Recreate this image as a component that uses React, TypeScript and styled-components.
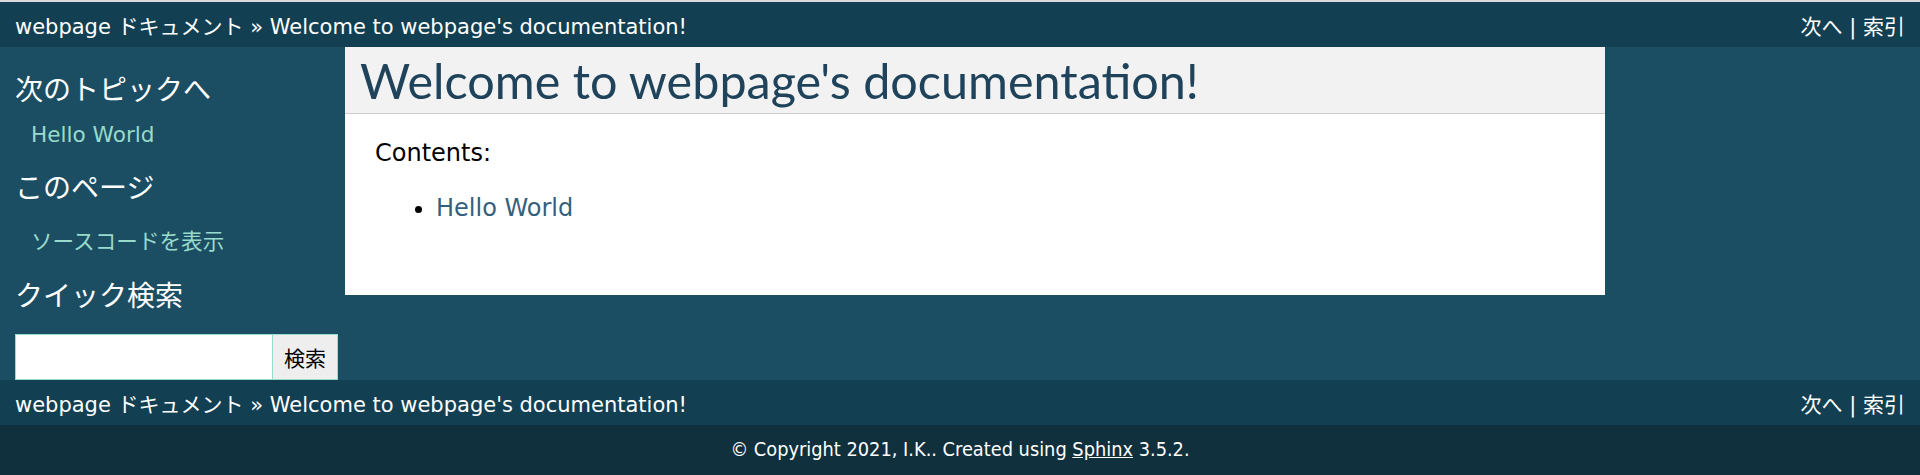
import { FC } from "react";
import styled, { createGlobalStyle } from "styled-components";

const GlobalStyle = createGlobalStyle`
  html, body {
    margin: 0;
    padding: 0;
  }
  body {
    background-color: #11303d;
    border-top: 2px solid #dadada;
    font-family: "DejaVu Sans", "Noto Sans CJK JP", sans-serif;
    color: #000;
  }
`;

const cjk = `"DejaVu Sans", "Noto Sans CJK JP", sans-serif`;
const head = `"Lato", "Noto Sans CJK JP", sans-serif`;

const Related: FC = () => (
  <RelatedBar>
    <Crumbs>
      <BarLink href="#">webpage ドキュメント</BarLink> » Welcome to webpage's
      documentation!
    </Crumbs>
    <Crumbs>
      <BarLink href="#">次へ</BarLink> | <BarLink href="#">索引</BarLink>
    </Crumbs>
  </RelatedBar>
);

const App: FC = () => {
  return (
    <>
      <GlobalStyle />
      <Related />
      <Main>
        <Sidebar>
          <SideHeading>次のトピックへ</SideHeading>
          <SideLink href="#">Hello World</SideLink>
          <SideHeading>このページ</SideHeading>
          <SideList>
            <li>
              <SideLink href="#">ソースコードを表示</SideLink>
            </li>
          </SideList>
          <SideHeading>クイック検索</SideHeading>
          <SearchForm>
            <SearchInput type="text" />
            <SearchButton type="button">検索</SearchButton>
          </SearchForm>
        </Sidebar>
        <Document>
          <Title>Welcome to webpage's documentation!</Title>
          <Body>
            <Caption>Contents:</Caption>
            <Toc>
              <li>
                <DocLink href="#">Hello World</DocLink>
              </li>
            </Toc>
          </Body>
        </Document>
      </Main>
      <Related />
      <Footer>
        © Copyright 2021, I.K.. Created using <FooterLink href="#">Sphinx</FooterLink>{" "}
        3.5.2.
      </Footer>
    </>
  );
};

export default App;

const RelatedBar = styled.div`
  display: flex;
  justify-content: space-between;
  align-items: center;
  height: 45px;
  padding: 0 15px;
  background-color: #133f52;
  color: #fff;
  font-family: ${cjk};
  font-size: 21px;
`;

const Crumbs = styled.div`
  white-space: nowrap;
`;

const BarLink = styled.a`
  color: #fff;
  text-decoration: none;
`;

const Main = styled.div`
  display: flex;
  align-items: flex-start;
  background-color: #1c4e63;
`;

const Sidebar = styled.div`
  width: 345px;
  box-sizing: border-box;
  padding: 22px 7px 0 15px;
  color: #fff;
`;

const SideHeading = styled.h3`
  margin: 0 0 11px;
  font-family: ${head};
  font-size: 28px;
  font-weight: 400;
  line-height: 40px;
  color: #fff;
`;

const SideLink = styled.a`
  display: block;
  margin: 0 0 17px 16px;
  font-family: ${cjk};
  font-size: 21.6px;
  line-height: 30px;
  color: #98dbcc;
  text-decoration: none;
`;

const SideList = styled.ul`
  list-style: none;
  margin: 0;
  padding: 9px 0 0;

  a {
    margin-bottom: 18px;
  }
`;

const SearchForm = styled.form`
  display: flex;
  margin: 19px 0 0;
  width: 323px;
  height: 46px;
`;

const SearchInput = styled.input`
  flex: 1;
  min-width: 0;
  box-sizing: border-box;
  height: 100%;
  margin: 0;
  border: 1.5px solid #98dbcc;
  background: #fff;
  outline: none;
`;

const SearchButton = styled.button`
  width: 65px;
  height: 100%;
  box-sizing: border-box;
  margin: 0;
  border: 1.5px solid #98dbcc;
  border-left: 0;
  background: #eeeeee;
  font-family: ${cjk};
  font-size: 21px;
  color: #000;
`;

const Document = styled.div`
  width: 1260px;
  background-color: #fff;
`;

const Title = styled.h1`
  margin: 0;
  padding: 4px 0 4px 15px;
  background-color: #f2f2f2;
  border-bottom: 1.5px solid #cccccc;
  font-family: ${head};
  font-size: 48.5px;
  font-weight: 400;
  line-height: 58px;
  color: #20435c;
`;

const Body = styled.div`
  padding: 24px 30px 45px;
`;

const Caption = styled.p`
  margin: 0 0 24px;
  font-size: 24px;
  line-height: 31px;
`;

const Toc = styled.ul`
  margin: 0 0 26px;
  padding-left: 61px;
  font-size: 24px;
  line-height: 31px;
`;

const DocLink = styled.a`
  color: #355f7c;
  text-decoration: none;
`;

const Footer = styled.div`
  height: 50px;
  line-height: 50px;
  text-align: center;
  color: #fff;
  font-family: "DejaVu Sans Condensed", sans-serif;
  font-size: 19.8px;
`;

const FooterLink = styled.a`
  color: #fff;
  text-decoration: underline;
`;
